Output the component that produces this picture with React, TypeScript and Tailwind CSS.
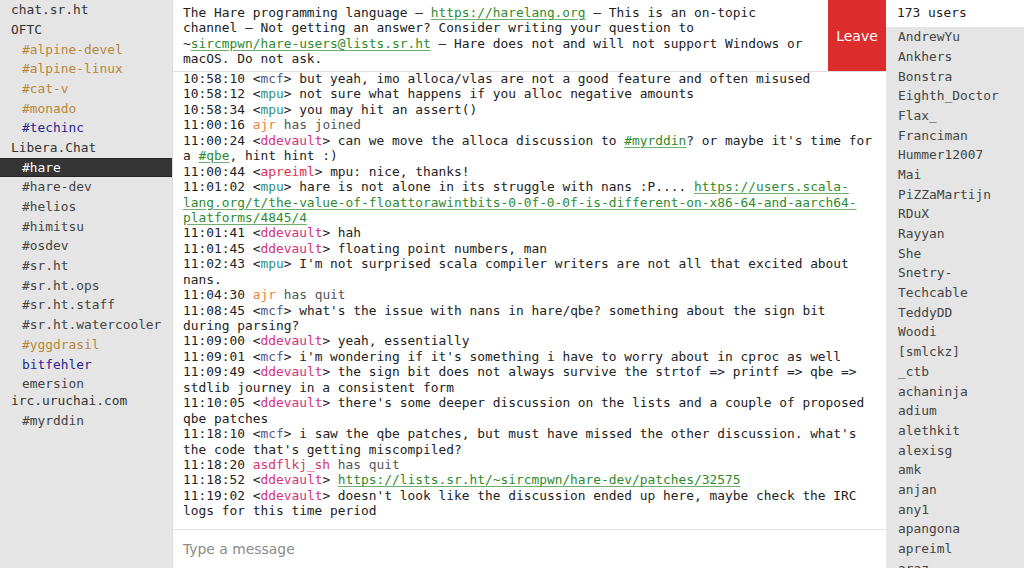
import React from "react";

type Seg = { t: string; c?: "link" };
type Msg =
  | { time: string; nick: string; color: string; body: Seg[] }
  | { time: string; nick: string; color: string; event: string };

const NICK: Record<string, string> = {
  mcf: "#55558f",
  mpu: "#2f8f86",
  ddevault: "#d6327c",
  apreiml: "#e0314f",
  ajr: "#e8843c",
  asdflkj_sh: "#d8336c",
};

const t = (s: string): Seg => ({ t: s });
const l = (s: string): Seg => ({ t: s, c: "link" });

const messages: Msg[] = [
  { time: "10:58:10", nick: "mcf", color: NICK.mcf, body: [t("but yeah, imo alloca/vlas are not a good feature and often misused")] },
  { time: "10:58:12", nick: "mpu", color: NICK.mpu, body: [t("not sure what happens if you alloc negative amounts")] },
  { time: "10:58:34", nick: "mpu", color: NICK.mpu, body: [t("you may hit an assert()")] },
  { time: "11:00:16", nick: "ajr", color: NICK.ajr, event: "has joined" },
  { time: "11:00:24", nick: "ddevault", color: NICK.ddevault, body: [t("can we move the alloca discussion to "), l("#myrddin"), t("? or maybe it's time for a "), l("#qbe"), t(", hint hint :)")] },
  { time: "11:00:44", nick: "apreiml", color: NICK.apreiml, body: [t("mpu: nice, thanks!")] },
  { time: "11:01:02", nick: "mpu", color: NICK.mpu, body: [t("hare is not alone in its struggle with nans :P.... "), l("https://users.scala-lang.org/t/the-value-of-floattorawintbits-0-0f-0-0f-is-different-on-x86-64-and-aarch64-platforms/4845/4")] },
  { time: "11:01:41", nick: "ddevault", color: NICK.ddevault, body: [t("hah")] },
  { time: "11:01:45", nick: "ddevault", color: NICK.ddevault, body: [t("floating point numbers, man")] },
  { time: "11:02:43", nick: "mpu", color: NICK.mpu, body: [t("I'm not surprised scala compiler writers are not all that excited about nans.")] },
  { time: "11:04:30", nick: "ajr", color: NICK.ajr, event: "has quit" },
  { time: "11:08:45", nick: "mcf", color: NICK.mcf, body: [t("what's the issue with nans in hare/qbe? something about the sign bit during parsing?")] },
  { time: "11:09:00", nick: "ddevault", color: NICK.ddevault, body: [t("yeah, essentially")] },
  { time: "11:09:01", nick: "mcf", color: NICK.mcf, body: [t("i'm wondering if it's something i have to worry about in cproc as well")] },
  { time: "11:09:49", nick: "ddevault", color: NICK.ddevault, body: [t("the sign bit does not always survive the strtof => printf => qbe => stdlib journey in a consistent form")] },
  { time: "11:10:05", nick: "ddevault", color: NICK.ddevault, body: [t("there's some deeper discussion on the lists and a couple of proposed qbe patches")] },
  { time: "11:18:10", nick: "mcf", color: NICK.mcf, body: [t("i saw the qbe patches, but must have missed the other discussion. what's the code that's getting miscompiled?")] },
  { time: "11:18:20", nick: "asdflkj_sh", color: NICK.asdflkj_sh, event: "has quit" },
  { time: "11:18:52", nick: "ddevault", color: NICK.ddevault, body: [l("https://lists.sr.ht/~sircmpwn/hare-dev/patches/32575")] },
  { time: "11:19:02", nick: "ddevault", color: NICK.ddevault, body: [t("doesn't look like the discussion ended up here, maybe check the IRC logs for this time period")] },
];

type Item = { name: string; kind: "net" | "chan"; color?: string; active?: boolean; tight?: boolean };
const ORANGE = "#b7873a";
const BLUE = "#25258f";
const sidebar: Item[] = [
  { name: "chat.sr.ht", kind: "net" },
  { name: "OFTC", kind: "net" },
  { name: "#alpine-devel", kind: "chan", color: ORANGE },
  { name: "#alpine-linux", kind: "chan", color: ORANGE },
  { name: "#cat-v", kind: "chan", color: ORANGE },
  { name: "#monado", kind: "chan", color: ORANGE },
  { name: "#techinc", kind: "chan", color: BLUE },
  { name: "Libera.Chat", kind: "net" },
  { name: "#hare", kind: "chan", active: true },
  { name: "#hare-dev", kind: "chan" },
  { name: "#helios", kind: "chan" },
  { name: "#himitsu", kind: "chan" },
  { name: "#osdev", kind: "chan" },
  { name: "#sr.ht", kind: "chan" },
  { name: "#sr.ht.ops", kind: "chan" },
  { name: "#sr.ht.staff", kind: "chan" },
  { name: "#sr.ht.watercooler", kind: "chan" },
  { name: "#yggdrasil", kind: "chan", color: ORANGE },
  { name: "bitfehler", kind: "chan", color: BLUE },
  { name: "emersion", kind: "chan" },
  { name: "irc.uruchai.com", kind: "net", tight: true },
  { name: "#myrddin", kind: "chan" },
];

const members = [
  "AndrewYu", "Ankhers", "Bonstra", "Eighth_Doctor", "Flax_", "Franciman", "Hummer12007", "Mai",
  "PiZZaMartijn", "RDuX", "Rayyan", "She", "Snetry-", "Techcable", "TeddyDD", "Woodi", "[smlckz]",
  "_ctb", "achaninja", "adium", "alethkit", "alexisg", "amk", "anjan", "any1", "apangona", "apreiml", "araz",
];

function Link({ children }: { children: React.ReactNode }) {
  return (
    <a className="text-[#2f8a2f] underline decoration-[#6fae6f] underline-offset-2">{children}</a>
  );
}

export default function App() {
  return (
    <div className="flex h-[568px] w-[1024px] overflow-hidden bg-white font-['DejaVu_Sans_Mono',monospace] text-[12.87px] leading-[15.43px] text-[#222]">
      {/* Sidebar */}
      <nav className="flex w-[172px] shrink-0 flex-col bg-[#e5e5e5]">
        {sidebar.map((it, i) => (
          <div
            key={i}
            className={
              "flex h-[19.7px] shrink-0 items-center whitespace-nowrap " +
              (it.tight ? "-mt-[2.5px] " : "") +
              (it.kind === "net" ? "pl-[11px] text-[#333]" : "pl-[22px] ") +
              (it.active ? "bg-[#353535] text-white border-y border-[#222]" : it.kind === "chan" ? "text-[#444]" : "")
            }
            style={it.color ? { color: it.color } : undefined}
          >
            {it.name}
          </div>
        ))}
      </nav>

      {/* Main */}
      <main className="flex min-w-0 flex-1 flex-col border-l border-[#dcdcdc]">
        <header className="flex h-[72px] shrink-0 border-b border-[#dedede] bg-white">
          <div className="flex-1 pl-[10px] pr-[18px] pt-[5px]">
            The Hare programming language — <Link>https://harelang.org</Link> — This is an on-topic channel — Not
            getting an answer? Consider writing your question to ~<Link>sircmpwn/hare-users@lists.sr.ht</Link> — Hare
            does not and will not support Windows or macOS. Do not ask.
          </div>
          <button className="flex w-[58px] shrink-0 items-center justify-center bg-[#dd2c2c] pt-[2px] font-['DejaVu_Sans',sans-serif] text-[14px] text-white">
            Leave
          </button>
        </header>

        <section className="-mt-[1px] min-h-0 flex-1 overflow-hidden pl-[10px] pr-[10px]">
          {messages.map((m, i) => (
            <div key={i}>
              <span>{m.time} </span>
              {"event" in m ? (
                <>
                  <span style={{ color: m.color }}>{m.nick}</span>
                  <span className="text-[#555]"> {m.event}</span>
                </>
              ) : (
                <>
                  <span>&lt;</span>
                  <span style={{ color: m.color }}>{m.nick}</span>
                  <span>&gt; </span>
                  {m.body.map((s, j) => (s.c === "link" ? <Link key={j}>{s.t}</Link> : <span key={j}>{s.t}</span>))}
                </>
              )}
            </div>
          ))}
        </section>

        <footer className="flex h-[39px] shrink-0 items-center border-t border-[#e2e2e2] bg-white pl-[10px] pt-[1px]">
          <span className="font-['DejaVu_Sans',sans-serif] text-[13.9px] text-[#8a8a8a]">Type a message</span>
        </footer>
      </main>

      {/* Members */}
      <aside className="flex w-[138px] shrink-0 flex-col bg-[#e5e5e5]">
        <div className="flex h-[27px] shrink-0 items-center bg-white pb-[1px] pl-[11px]">173 users</div>
        {members.map((n) => (
          <div key={n} className="flex h-[19.7px] shrink-0 items-center pl-[12px] text-[#444]">
            {n}
          </div>
        ))}
      </aside>
    </div>
  );
}
